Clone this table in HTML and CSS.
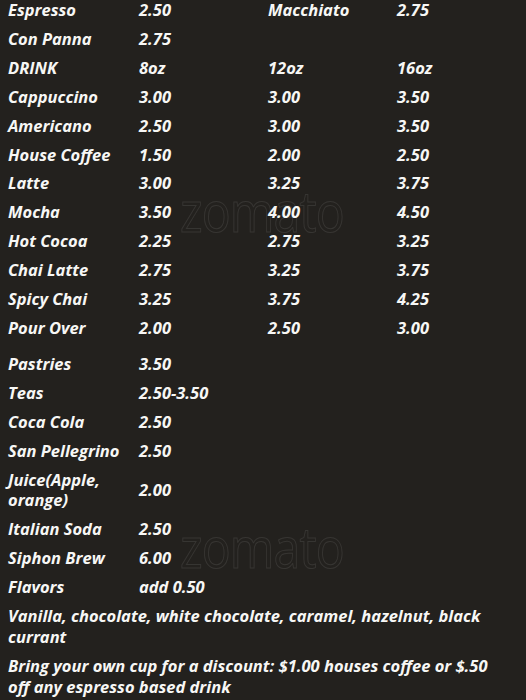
FILE: index.html
```html
<!DOCTYPE html>
<html>
<head>
<meta charset="utf-8">
<link rel="stylesheet" href="styles.css">
</head>
<body>
<div class="menu">
  <table class="prices sizes">
    <tr><td>Espresso</td><td>2.50</td><td>Macchiato</td><td>2.75</td></tr>
    <tr><td>Con Panna</td><td>2.75</td><td></td><td></td></tr>
    <tr><td>DRINK</td><td>8oz</td><td>12oz</td><td>16oz</td></tr>
    <tr><td>Cappuccino</td><td>3.00</td><td>3.00</td><td>3.50</td></tr>
    <tr><td>Americano</td><td>2.50</td><td>3.00</td><td>3.50</td></tr>
    <tr><td>House Coffee</td><td>1.50</td><td>2.00</td><td>2.50</td></tr>
    <tr><td>Latte</td><td>3.00</td><td>3.25</td><td>3.75</td></tr>
    <tr><td>Mocha</td><td>3.50</td><td>4.00</td><td>4.50</td></tr>
    <tr><td>Hot Cocoa</td><td>2.25</td><td>2.75</td><td>3.25</td></tr>
    <tr><td>Chai Latte</td><td>2.75</td><td>3.25</td><td>3.75</td></tr>
    <tr><td>Spicy Chai</td><td>3.25</td><td>3.75</td><td>4.25</td></tr>
    <tr><td>Pour Over</td><td>2.00</td><td>2.50</td><td>3.00</td></tr>
  </table>
  <table class="prices others">
    <tr><td class="name">Pastries</td><td>3.50</td></tr>
    <tr><td class="name">Teas</td><td>2.50-3.50</td></tr>
    <tr><td class="name">Coca Cola</td><td>2.50</td></tr>
    <tr><td class="name">San Pellegrino</td><td>2.50</td></tr>
    <tr><td class="name">Juice(Apple, orange)</td><td>2.00</td></tr>
    <tr><td class="name">Italian Soda</td><td>2.50</td></tr>
    <tr><td class="name">Siphon Brew</td><td>6.00</td></tr>
    <tr><td class="name">Flavors</td><td>add 0.50</td></tr>
    <tr><td colspan="2" class="note">Vanilla, chocolate, white chocolate, caramel, hazelnut, black currant</td></tr>
    <tr><td colspan="2" class="note">Bring your own cup for a discount: $1.00 houses coffee or $.50 off any espresso based drink</td></tr>
  </table>
  <div class="mark mark-top">zomato</div>
  <div class="mark mark-bottom">zomato</div>
</div>
</body>
</html>
```
FILE: styles.css
```css
html, body {
  margin: 0;
  padding: 0;
  background: #23211e;
}
body {
  width: 526px;
  height: 700px;
  overflow: hidden;
  font-family: "Open Sans", "DejaVu Sans", sans-serif;
  font-style: italic;
  font-weight: 700;
  font-size: 16.5px;
  color: #f7f7f5;
}
.menu {
  position: relative;
}
.prices {
  border-collapse: collapse;
  width: 526px;
}
.prices td {
  padding: 4px 0 4px 8px;
  line-height: 20.9px;
  vertical-align: middle;
  text-align: left;
  white-space: nowrap;
}
.sizes tr:first-child td {
  padding-top: 0;
}
.sizes td {
  width: 121px;
}
.sizes td:first-child {
  width: 123px;
}
.sizes td:last-child {
  width: auto;
}
.others {
  margin-top: 7px;
}
.others td.name {
  width: 123px;
  white-space: normal;
}
.others td.note {
  white-space: normal;
  padding-right: 20px;
}
.mark {
  position: absolute;
  left: 180px;
  font-family: "Open Sans", sans-serif;
  font-style: normal;
  font-weight: 400;
  font-size: 56px;
  line-height: 56px;
  letter-spacing: -1px;
  transform: scaleX(0.86);
  transform-origin: left top;
  color: transparent;
  -webkit-text-stroke: 1px rgba(255, 255, 255, 0.09);
  pointer-events: none;
}
.mark-top { top: 182px; }
.mark-bottom { top: 518px; }
```
